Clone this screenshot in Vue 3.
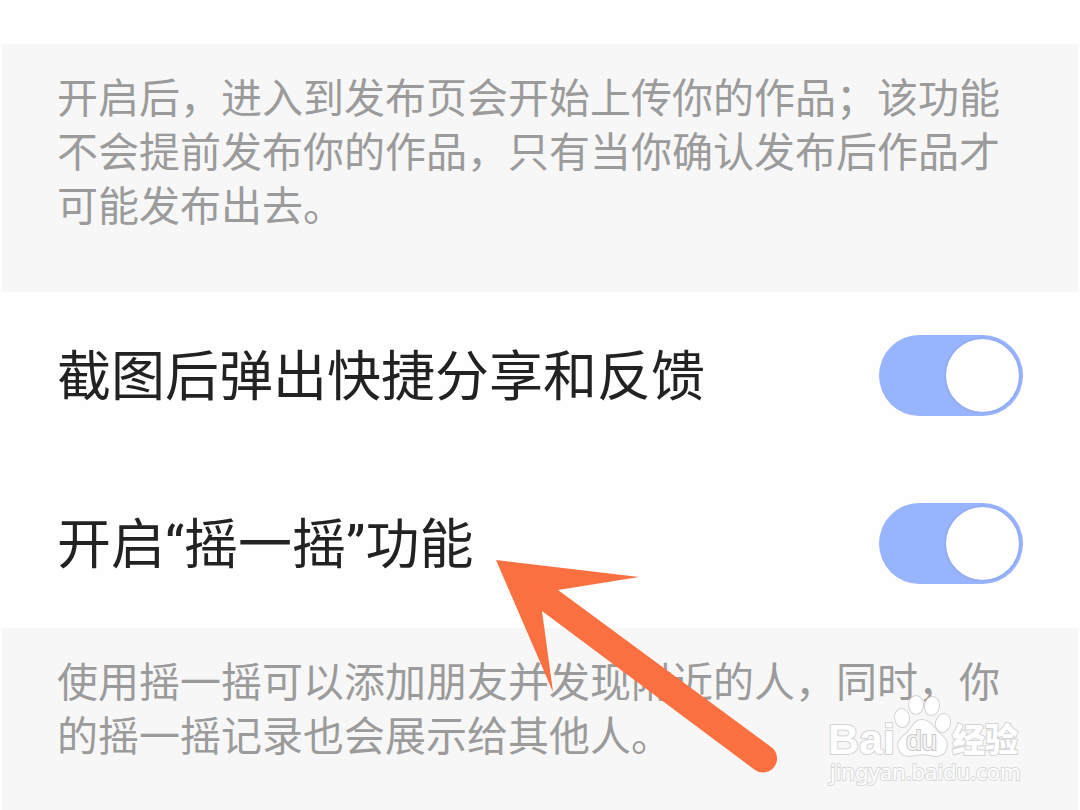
<script setup>
import { ref } from 'vue'

const settings = ref([
  { id: 'screenshot-share', label: '截图后弹出快捷分享和反馈', on: true },
  { id: 'shake', label: '开启“摇一摇”功能', on: true },
])
</script>

<template>
  <main class="page">
    <p class="note">开启后，进入到发布页会开始上传你的作品；该功能不会提前发布你的作品，只有当你确认发布后作品才可能发布出去。</p>

    <section class="rows">
      <div v-for="item in settings" :key="item.id" class="row">
        <label class="label" :for="item.id">{{ item.label }}</label>
        <input :id="item.id" v-model="item.on" class="switch" type="checkbox" role="switch" />
      </div>
    </section>

    <p class="note last">使用摇一摇可以添加朋友并发现附近的人，同时，你的摇一摇记录也会展示给其他人。</p>

    <svg class="arrow" viewBox="0 0 284 214" width="284" height="214" aria-hidden="true">
      <path d="M1 0 L144 17 L63 30 L276 187 A14 14 0 0 1 260 210 L47 51 L58 132 Z" fill="#fa7040" />
    </svg>

    <svg class="watermark" viewBox="0 0 204 100" width="204" height="100" role="img" aria-label="Baidu 经验">
      <g class="mark">
        <text x="4" y="62" class="brand">Bai</text>
        <ellipse cx="78" cy="26" rx="7" ry="9" transform="rotate(-8 78 26)" />
        <ellipse cx="92" cy="13" rx="7" ry="9" />
        <ellipse cx="108" cy="14" rx="7" ry="9" transform="rotate(12 108 14)" />
        <ellipse cx="119" cy="31" rx="7" ry="9" transform="rotate(14 119 31)" />
        <path d="M98 28 C106 28 109 35 114 40 C120 45 125 50 122 57 C120 64 113 65 106 63 C101 62 96 62 91 63 C84 65 77 64 75 57 C72 50 78 45 84 40 C89 35 90 28 98 28 Z" />
        <text x="128" y="60" class="cjk">经验</text>
      </g>
      <text x="82" y="58" class="du">du</text>
      <text x="6" y="88" class="url">jingyan.baidu.com</text>
    </svg>
  </main>
</template>

<style>
body {
  margin: 0;
  background: #fefefe;
}
</style>

<style scoped>
.page {
  position: relative;
  display: flex;
  flex-direction: column;
  min-height: 100vh;
  box-sizing: border-box;
  padding: 44px 2px 0;
  overflow: hidden;
  background: #fefefe;
  font-family: Roboto, "Noto Sans CJK SC", sans-serif;
}

.note {
  margin: 0;
  padding: 24px 55px 62px;
  background: #f7f7f7;
  color: #9b9b9b;
  font-family: "Noto Sans CJK SC", sans-serif;
  font-size: 41px;
  line-height: 54px;
}

.last {
  flex: 1;
  padding-bottom: 50px;
}

.row {
  display: flex;
  align-items: center;
  justify-content: space-between;
  box-sizing: border-box;
  min-height: 168px;
  padding: 0 55px 1px;
}

.label {
  padding-top: 4px;
  color: #222;
  font-size: 54px;
  line-height: 80px;
}

.switch {
  appearance: none;
  flex: none;
  width: 144px;
  height: 81px;
  margin: 0;
  padding: 4px;
  box-sizing: border-box;
  border-radius: 41px;
  background: #d8d8d8;
  cursor: pointer;
}

.switch::before {
  content: "";
  display: block;
  width: 73px;
  height: 73px;
  border-radius: 50%;
  background: #fff;
  box-shadow: 0 0 3px rgba(60, 80, 140, 0.3);
}

.switch:checked {
  background: #99b4ff;
}

.switch:checked::before {
  margin-left: auto;
}

.arrow {
  position: absolute;
  left: 495px;
  top: 560px;
  pointer-events: none;
}

.watermark {
  position: absolute;
  left: 824px;
  top: 692px;
  pointer-events: none;
}

.mark {
  fill: #fefefe;
  stroke: #d4d4d4;
  stroke-width: 2px;
  stroke-linejoin: round;
  paint-order: stroke;
}

.brand {
  font: 700 43px "Liberation Sans", sans-serif;
}

.cjk {
  font: 900 33px "Noto Sans CJK SC", sans-serif;
}

.du {
  font: 400 28px "Liberation Sans", sans-serif;
  fill: #f4f4f4;
  stroke: #c8c8c8;
  stroke-width: 2px;
  paint-order: stroke;
}

.url {
  font: 400 22px "Noto Sans", sans-serif;
  fill: #fefefe;
  stroke: #dadada;
  stroke-width: 2px;
  paint-order: stroke;
}
</style>
